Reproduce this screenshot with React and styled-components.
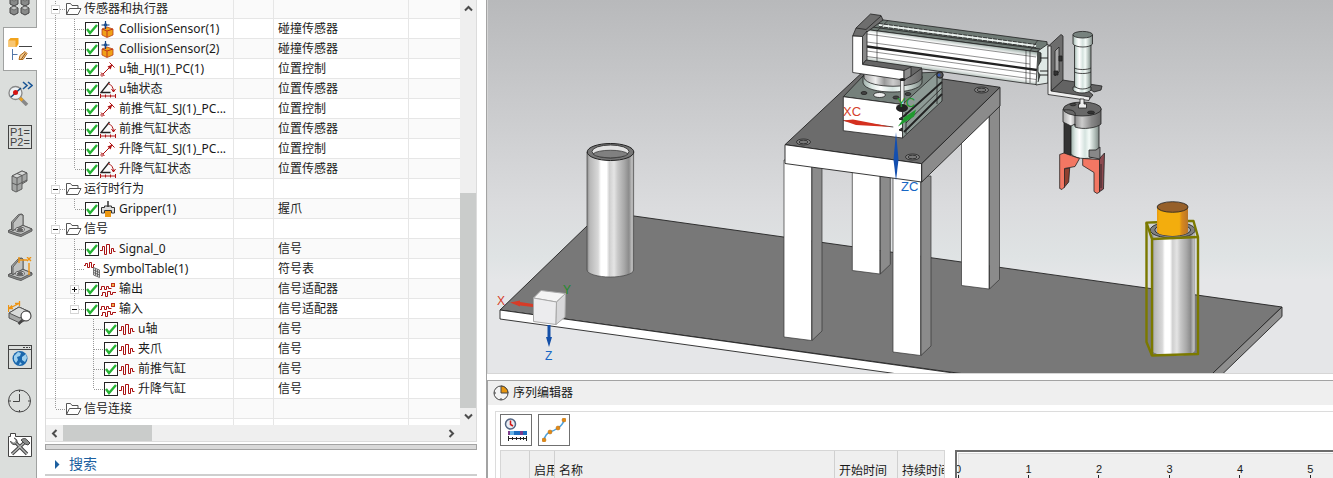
import React from 'react';
import styled, { createGlobalStyle } from 'styled-components';

const GlobalStyle = createGlobalStyle`
  * { box-sizing: border-box; }
  body {
    margin: 0;
    background: #fff;
    color: #1a1a1a;
    font-family: "Noto Sans", "Noto Sans CJK SC", sans-serif;
    font-size: 12px;
    line-height: 16px;
  }
  button {
    margin: 0;
    padding: 0;
    border: 0;
    background: none;
    color: inherit;
    font: inherit;
  }
  svg { display: block; }
`;

const Page = styled.div`
  display: flex;
  height: 100vh;
  overflow: hidden;
`;

const Rail = styled.nav`
  flex: 0 0 37px;
  overflow: hidden;
  background: #dbdedc;
  box-shadow: inset -1px 0 #a0a2a1;
`;

const RailList = styled.div`
  display: flex;
  flex-direction: column;
  margin-top: -17px;
`;

const RailButton = styled.button`
  height: 44px;
  margin-left: 3px;
  padding-left: 4px;
  background: ${ props => props.$active ? '#fff' : 'none' };
  border: 1px solid ${ props => props.$active ? '#a0a2a1' : 'transparent' };
  border-width: 1px 0 1px 1px;
`;

const Navigator = styled.aside`
  flex: 0 0 432px;
  display: flex;
  flex-direction: column;
  margin: 0 9px 0 8px;
  padding-bottom: 2px;
`;

const TreeFrame = styled.div`
  flex: 1;
  min-height: 0;
  display: grid;
  grid-template-columns: 1fr 16px;
  grid-template-rows: 1fr 16px;
  border: 1px solid #dcdcdc;
  border-top: 0;
  background: #efefef;
`;

const TreeView = styled.div`
  overflow: hidden;
  background: #fff;
`;

const TreeTable = styled.table`
  width: 100%;
  margin-top: -1px;
  table-layout: fixed;
  border-collapse: separate;
  border-spacing: 0;
  tr:nth-child(odd) { background: #fafafa; }
`;

const Cell = styled.td`
  height: 20px;
  padding: 0 0 0 ${ props => props.$text ? 4 : 0 }px;
  white-space: nowrap;
  overflow: hidden;
  box-shadow: inset -1px -1px #e6e6e6;
  &:last-child { box-shadow: inset 0 -1px #e6e6e6; }
`;

const NodeLine = styled.div`
  display: flex;
  align-items: center;
  height: 20px;
`;

const NodeLabel = styled.label`
  padding-left: 2px;
`;

const Tick = styled.input`
  appearance: none;
  flex: none;
  width: 14px;
  height: 14px;
  margin: 0 1px;
  border: 1px solid #222;
  background: #fff url("data:image/svg+xml,%3Csvg xmlns='http://www.w3.org/2000/svg' viewBox='0 0 12 12'%3E%3Cpath d='M1 6l3 4L11 2' fill='none' stroke='%2326b535' stroke-width='2.4'/%3E%3C/svg%3E");
`;

const ScrollColumn = styled.div`
  display: flex;
  flex-direction: column;
  align-items: stretch;
  min-height: 0;
`;

const ScrollRow = styled.div`
  display: flex;
`;

const ScrollArrow = styled.button`
  flex: 0 0 17px;
  display: flex;
  align-items: center;
  justify-content: center;
`;

const ScrollTrack = styled.div`
  flex: 1;
  display: flex;
  flex-direction: ${ props => props.$vertical ? 'column' : 'row' };
  justify-content: ${ props => props.$vertical ? 'flex-end' : 'flex-start' };
`;

const ScrollThumb = styled.div`
  flex: 0 0 ${ props => props.$size };
  background: #cacccb;
`;

const Splitter = styled.div`
  height: 6px;
  margin-top: 2px;
  border: 1px solid #a3a3a3;
  background: #d9d9d9;
`;

const SearchToggle = styled.button`
  display: flex;
  align-items: center;
  gap: 9px;
  height: 26px;
  padding: 4px 0 0 9px;
  border-bottom: 2px solid #cecece;
  color: #1c5f9f;
  font-size: 14px;
`;

const Workspace = styled.main`
  flex: 1;
  min-width: 0;
  display: flex;
  flex-direction: column;
  gap: 6px;
  border-left: 1px solid #a3a3a3;
`;

const Viewport = styled.section`
  flex: 1;
  min-height: 0;
  border: 1px solid #d6d6d6;
  border-width: 0 0 1px 1px;
  background: linear-gradient(#b8b9bb, #dbdcde 56%, #dfe3e4 69%, #e5e6e8 75%, #e5e6e8);
`;

const Editor = styled.section`
  flex: 0 0 98px;
  overflow: hidden;
  border: 1px solid #a3a3a3;
  border-width: 1px 0 0 1px;
`;

const EditorTitle = styled.h2`
  display: flex;
  align-items: center;
  gap: 4px;
  height: 24px;
  margin: 0 0 6px;
  padding-left: 5px;
  background: #efefef;
  font-size: 12px;
  font-weight: 400;
`;

const EditorBody = styled.div`
  margin-left: 7px;
  padding: 2px 0 0 4px;
  border: 1px solid #dcdcdc;
  border-width: 1px 0 0 1px;
`;

const Toolbar = styled.div`
  display: flex;
  gap: 6px;
  margin-bottom: 4px;
`;

const ToolButton = styled.button`
  width: 32px;
  height: 32px;
  padding: 3px;
  border: 1px solid #707070;
  background: #fff;
`;

const Schedule = styled.div`
  display: flex;
  gap: 10px;
`;

const StepTable = styled.table`
  flex: 0 0 445px;
  width: 445px;
  table-layout: fixed;
  border-spacing: 0;
  border: 1px solid #d6d6d6;
  background: #efefef;
`;

const StepHead = styled.th`
  height: 40px;
  padding: 0 0 0 4px;
  border-right: 1px solid #d0d0d0;
  font-weight: 400;
  text-align: left;
  white-space: nowrap;
  overflow: hidden;
  &:last-child { border-right: 0; }
`;

const Ruler = styled.div`
  flex: 1;
  min-width: 0;
  display: flex;
  overflow: hidden;
  height: 40px;
  border: 2px solid #6c6c6c;
  border-width: 2px 0 0 2px;
  padding: 12px 0 0 1px;
  background: #efefef;
  box-shadow: inset 1px 1px #fff, inset 2px 2px #d9d9d9;
`;

const Second = styled.div`
  flex: 0 0 18.8%;
  height: 26px;
`;

const SecondLabel = styled.span`
  display: block;
  width: 20px;
  margin-left: -10px;
  font: 11px/11px "Liberation Sans", sans-serif;
  text-align: center;
  &::after {
    content: "";
    display: block;
    width: 1px;
    height: 10px;
    margin: 0 auto;
    background: #222;
  }
`;

// line: passes through, tee: passes with a branch, end: last branch
const Guide = ({ kind, toggle }) => (
  <svg width="19" height="20" viewBox="0 0 19 20" shapeRendering="crispEdges" style={{ flex: 'none' }}>
    <g stroke="#999" strokeDasharray="1 1" fill="none">
      { kind !== 'none' && <path d={ kind === 'end' ? 'M9.5 0V10' : 'M9.5 0V20' } /> }
      { (kind === 'tee' || kind === 'end') && <path d="M9.5 10.5H19" /> }
    </g>
    { toggle && <>
      <rect x="5.5" y="6.5" width="8" height="8" fill="#fff" stroke="#d5d5d5" />
      <path d={ toggle === 'plus' ? 'M7 10.5h5M9.5 8v5' : 'M7 10.5h5' } stroke="#111" fill="none" />
    </> }
  </svg>
);

const icons = {
  folder: <path d="M1.5 13.5v-11h4l1.500 2h6v3M1.5 13.5l3-6h11.500l-3 6z" fill="#fff" stroke="#555" />,
  sensor: <>
    <path d="M2 8l5-2 6 2v6l-6 2.500-5-2.500z" fill="#f0a018" stroke="#b8401c" strokeWidth="0.800" />
    <path d="M2 8l5 2v6M7 10l6-2" fill="none" stroke="#c03418" />
    <path d="M5.500 0v8M1.500 4h8" stroke="#123f7c" strokeWidth="1.200" />
    <circle cx="5.500" cy="4" r="1.800" fill="#1c4f92" />
  </>,
  position: <>
    <path d="M2.500 13.500L11 5M9.500 1.500l5 5M1 11.500l3.500 3.500" stroke="#ad1010" fill="none" />
    <path d="M7.500 5.500l5-2-2 5z" fill="#ad1010" />
    <circle cx="2" cy="14" r="1.200" fill="#fff" stroke="#ad1010" strokeWidth="0.800" />
  </>,
  angle: <>
    <path d="M9.500 1L1 11.500h9.500" stroke="#222" strokeWidth="1.300" fill="none" />
    <path d="M8 2.500c3.500 1 5.500 4 5.500 8.500M11.500 8l2 3 2-3M0.500 13v4M15.500 13v4M1 15h14M5.500 13.500v3M10.500 13.500v3" stroke="#b01212" fill="none" />
  </>,
  gripper: <>
    <path d="M1.500 12V6.500h3V5h7v1.500h3V12h-3V9.500h-7V12z" fill="#ddd" stroke="#333" />
    <path d="M8 0v6" stroke="#333" strokeWidth="1.500" />
    <rect x="5" y="10" width="6" height="6" fill="#ec970f" />
  </>,
  signal: <path d="M0 9.500h2.500v-4h2v8h2v-10h3v9h2v-5h2v3h2" fill="none" stroke="#a91010" />,
  symbols: <>
    <path d="M0 4.500h1.500V2.500h2v4h2v-5h2v5h2V3.500H11" fill="none" stroke="#a91010" />
    <path d="M9.500 6.500l6 2.500v7.500l-6-2.500z" fill="#ddd" stroke="#555" strokeWidth="0.800" />
    <path d="M11.500 7.500v7M13.500 8.500v7M9.500 9l6 2.500M9.500 11.500l6 2.500" stroke="#555" strokeWidth="0.800" />
  </>,
  adapter: <>
    <path d="M0 8.500h1.500v-3h3v3h2v-3h2v2h3M1 14.500h1.500v-3h3v4h2v-5h3v3h2v-2H16" fill="none" stroke="#a91010" />
    <rect x="11.500" y="2.500" width="3" height="3" fill="#f3b44a" stroke="#c0301a" />
  </>,
};

const RowIcon = ({ name }) => (
  <svg width="17" height="17" viewBox="0 0 17 17" style={{ flex: 'none' }}>{ icons[name] }</svg>
);

const nodes = [
  { guides: ['tee'], toggle: 'minus', icon: 'folder', label: '传感器和执行器' },
  { guides: ['line', 'tee'], check: true, icon: 'sensor', label: 'CollisionSensor(1)', type: '碰撞传感器' },
  { guides: ['line', 'tee'], check: true, icon: 'sensor', label: 'CollisionSensor(2)', type: '碰撞传感器' },
  { guides: ['line', 'tee'], check: true, icon: 'position', label: 'u轴_HJ(1)_PC(1)', type: '位置控制' },
  { guides: ['line', 'tee'], check: true, icon: 'angle', label: 'u轴状态', type: '位置传感器' },
  { guides: ['line', 'tee'], check: true, icon: 'position', label: '前推气缸_SJ(1)_PC...', type: '位置控制' },
  { guides: ['line', 'tee'], check: true, icon: 'angle', label: '前推气缸状态', type: '位置传感器' },
  { guides: ['line', 'tee'], check: true, icon: 'position', label: '升降气缸_SJ(1)_PC...', type: '位置控制' },
  { guides: ['line', 'end'], check: true, icon: 'angle', label: '升降气缸状态', type: '位置传感器' },
  { guides: ['tee'], toggle: 'minus', icon: 'folder', label: '运行时行为' },
  { guides: ['line', 'end'], check: true, icon: 'gripper', label: 'Gripper(1)', type: '握爪' },
  { guides: ['tee'], toggle: 'minus', icon: 'folder', label: '信号' },
  { guides: ['line', 'tee'], check: true, icon: 'signal', label: 'Signal_0', type: '信号' },
  { guides: ['line', 'tee'], icon: 'symbols', label: 'SymbolTable(1)', type: '符号表' },
  { guides: ['line', 'tee'], toggle: 'plus', check: true, icon: 'adapter', label: '输出', type: '信号适配器' },
  { guides: ['line', 'end'], toggle: 'minus', check: true, icon: 'adapter', label: '输入', type: '信号适配器' },
  { guides: ['line', 'none', 'tee'], check: true, icon: 'signal', label: 'u轴', type: '信号' },
  { guides: ['line', 'none', 'tee'], check: true, icon: 'signal', label: '夹爪', type: '信号' },
  { guides: ['line', 'none', 'tee'], check: true, icon: 'signal', label: '前推气缸', type: '信号' },
  { guides: ['line', 'none', 'end'], check: true, icon: 'signal', label: '升降气缸', type: '信号' },
  { guides: ['end'], icon: 'folder', label: '信号连接' },
];

const TreeRow = ({ node, id }) => (
  <tr>
    <Cell>
      <NodeLine>
        { node.guides.map((kind, i) =>
          <Guide key={ i } kind={ kind } toggle={ i === node.guides.length - 1 ? node.toggle : null } />
        ) }
        { node.check && <Tick type="checkbox" id={ id } defaultChecked /> }
        <RowIcon name={ node.icon } />
        <NodeLabel htmlFor={ node.check ? id : undefined }>{ node.label }</NodeLabel>
      </NodeLine>
    </Cell>
    <Cell />
    <Cell $text>{ node.type }</Cell>
    <Cell />
  </tr>
);

const Chevron = ({ d }) => (
  <svg width="9" height="9" viewBox="0 0 9 9"><path d={ d } fill="none" stroke="#4c4c4c" strokeWidth="2" /></svg>
);

const bracket = <g stroke="#555" strokeWidth="0.900" strokeLinejoin="round">
  <path d="M0.500 17.500L14 12L24 16v2l-11 5.500-4-1-8.500-3z" fill="#8a8c8b" />
  <path d="M0.500 17.500L14 12L24 16l-11 5.500-4-1z" fill="#c3c5c4" />
  <path d="M3.500 17V9l7-7.500 3-0.500 1.500 1v10L5 17.500z" fill="#a2a4a3" />
  <path d="M5 17.500V10l7-8.500 3 0.500v10z" fill="#bfc1c0" />
  <ellipse cx="12" cy="16.500" rx="4.500" ry="2.300" fill="#e2e3e2" />
  <ellipse cx="12" cy="16.800" rx="2.800" ry="1.300" fill="#666" />
</g>;

const railItems = [
  { label: '装配', art: [[6, 8], [17, 8], [6, 17], [17, 17]].map(([x, y]) =>
    <g key={ `${x}-${y}` } stroke="#444" fill="#888a89">
      <path d={ `M${x - 4} ${y - 2}l4-2 4 2v5l-4 2-4-2z` } />
      <path d={ `M${x - 4} ${y - 2}l4 2 4-2-4-2z` } fill="#c2c4c3" strokeWidth="0.600" />
    </g>
  ) },
  { label: '导航器', active: true, art: <>
    <path d="M0.500 3l2-2h8v6l-2 3h-8z" fill="#f1a31d" />
    <path d="M0.500 3.500h7V10h-7z" fill="#f8c774" />
    <path d="M11 9.500h13M18 21.500h6" stroke="#444" />
    <path d="M4.500 12v11M4.500 17.500h5" stroke="#5377a8" fill="none" />
    <path d="M11 22.500l1-4 5-4 2 2-4 6z" fill="#f4c98b" stroke="#b26c1c" />
    <path d="M13.500 22l4-6" stroke="#8d541a" />
  </> },
  { label: '检查', art: <>
    <circle cx="7.500" cy="12" r="6.500" fill="#eef2f5" stroke="#888" strokeWidth="1.300" />
    <path d="M3 16L13 7" stroke="#174574" strokeWidth="1.500" />
    <circle cx="7.500" cy="11.500" r="2.500" fill="#d61515" />
    <path d="M12 17l7 7" stroke="#888" strokeWidth="3.500" />
    <path d="M12 17l2.500 2.500" stroke="#e8a020" strokeWidth="3" />
    <path d="M15 1l4 3.500-4 3.500M20 1l4 3.500-4 3.500" fill="none" stroke="#1c5796" strokeWidth="1.600" />
  </> },
  { label: '表达式', art: <>
    <rect x="0.500" y="0.500" width="23" height="23" fill="none" stroke="#444" />
    <g fill="#444" fontFamily="Liberation Sans, sans-serif" fontSize="11">
      <text x="2" y="11">P1=</text><text x="2" y="21">P2=</text>
    </g>
  </> },
  { label: '重用库', art: <g stroke="#555" strokeWidth="0.900" fill="#a4a6a5" strokeLinejoin="round">
    <path d="M4 7l10-5 5 2v8l-5 3v5l-6 3-4-2z" />
    <path d="M4 7l10-5 5 2-10 5z" fill="#d6d8d7" />
    <path d="M9 9v13.500M4 14l5 2 10-5M14 6.500v8.500M9 4.500l5 2" fill="none" />
  </g> },
  { label: '零件', art: bracket },
  { label: '尺寸', art: <>
    { bracket }
    <path d="M11 3h8M21 6v12M11 0v6M19 0l4 4M23 0l-4 4" stroke="#ed9312" strokeWidth="1.400" />
  </> },
  { label: '测量', art: <>
    <path d="M1 12l10-6 11 5v6l-10 5-11-5z" fill="#a6a8a7" stroke="#555" />
    <path d="M1 12l10-6 11 5-10 6z" fill="#d8dad9" stroke="#555" />
    <circle cx="18" cy="15" r="5" fill="#fff" stroke="#333" />
    <path d="M14.500 19l-4 4" stroke="#444" strokeWidth="2.500" />
    <path d="M1 7.500l10-5M0.500 4v7M11.500 0v5M1 7.500l3-3M1 7.500h4M11 2.500h-4" stroke="#ed9312" strokeWidth="1.300" />
  </> },
  { label: '浏览器', art: <>
    <rect x="0.500" y="0.500" width="23" height="23" fill="#dbdedc" stroke="#444" />
    <path d="M1 4.500h22" stroke="#444" />
    <path d="M15 2.500h2M18 2.500h2M21 2.500h1" stroke="#444" />
    <circle cx="12" cy="13.500" r="7.500" fill="#1a67ad" />
    <path d="M6 11l4-4 3 1-1 3-3 1 1 3-2 3-2-3zM14 12l4-3 1 4-2 4-3-2zM12 17l2 2-3 1z" fill="#9fd0ee" />
  </> },
  { label: '历史', art: <>
    <circle cx="11.500" cy="12" r="11" fill="none" stroke="#444" />
    <path d="M11.500 5v7.500H5M11.500 1v2M11.500 21v2M1 12h2M20 12h2" stroke="#444" fill="none" />
  </> },
  { label: '工具', art: <>
    <path d="M0.500 23.500V3.500h2v-3h5v3h16v20z" fill="#fff" stroke="#444" />
    <path d="M7 9l12 12M4 21L17 9" stroke="#444" strokeWidth="3.400" />
    <path d="M7 9l12 12M4 21L17 9" stroke="#b5b7b6" strokeWidth="1.400" />
    <path d="M2.500 8a4 4 0 0 0 6 3M6 5a4 4 0 0 1 3 5M13 7c2-2 5-2 6 0l3 3-2 2-3-1z" fill="#8a8c8b" stroke="#444" />
  </> },
];

const Metal = ({ id, stops }) => (
  <linearGradient id={ id }>
    { stops.map(([at, color]) => <stop key={ at } offset={ at } stopColor={ color } />) }
  </linearGradient>
);

const Leg = ({ x, bottom, top }) => (
  <g stroke="#333" strokeWidth="0.700">
    <path d={ `M${x + 28} ${top}V${bottom + 3.5}L${x + 38} ${bottom - 6}V${top}z` } fill="#8b8b8b" />
    <path d={ `M${x} ${top}V${bottom}L${x + 27.5} ${bottom + 3.5}V${top}z` } fill="#fff" />
  </g>
);

const Hole = ({ x, y }) => (
  <g fill="#aaa" stroke="#222" strokeWidth="0.800">
    <ellipse cx={ x } cy={ y } rx="7" ry="3" fill="#888" />
    <ellipse cx={ x } cy={ y } rx="4.500" ry="1.800" fill="#777" />
  </g>
);

const Scene = () => (
  <svg width="100%" height="100%" viewBox="488 0 845 373" preserveAspectRatio="xMidYMid slice" role="img" aria-label="模型">
    <defs>
      <Metal id="tube" stops={ [[0, '#8c8c8c'], [0.06, '#b8b8b8'], [0.24, '#d8d8d8'], [0.3, '#fff'], [0.42, '#fff'], [0.48, '#d0d0d0'], [0.58, '#e4e4e4'], [0.66, '#c8c8c8'], [0.8, '#a8a8a8'], [0.9, '#8b8b8b'], [0.96, '#bbb'], [1, '#aaa']] } />
      <Metal id="glass" stops={ [[0, '#9fb0aa'], [0.15, '#dce8e4'], [0.3, '#fff'], [0.5, '#d4e2de'], [0.65, '#f4fbf8'], [0.85, '#b2bfba'], [1, '#7e8884']] } />
      <Metal id="steel" stops={ [[0, '#aaa'], [0.2, '#eee'], [0.35, '#999'], [0.5, '#ccc'], [0.75, '#888'], [1, '#666']] } />
      <Metal id="orange" stops={ [[0, '#e99a13'], [0.08, '#f3ad0d'], [0.72, '#f3ad0d'], [0.8, '#d98a1c'], [1, '#b8742b']] } />
      <linearGradient id="rail" gradientUnits="userSpaceOnUse" x1="950" y1="40" x2="945" y2="74">
        <stop offset="0" stopColor="#a6b5af" /><stop offset="0.14" stopColor="#fff" />
        <stop offset="0.8" stopColor="#fff" /><stop offset="1" stopColor="#9aaba4" />
      </linearGradient>
    </defs>

    {/* base plate */}
    <g stroke="#222" strokeWidth="0.900" strokeLinejoin="round">
      <path d="M500 310L602 211.500L1282 307L1213 373.500L1200 400L957 373z" fill="#787878" />
      <path d="M1282 307v9.500L1223 373.500L1213 380V373z" fill="#8f8f8f" />
      <path d="M500 310L957 373.500L970 385L891 373L500 319z" fill="#fff" />
    </g>

    {/* left tube */}
    <path d="M587 152V270a23.300 7 0 0 0 46.600 0V152z" fill="url(#tube)" stroke="#444" strokeWidth="0.700" />
    <ellipse cx="610.500" cy="152" rx="23.300" ry="8.500" fill="#777" stroke="#222" />
    <ellipse cx="610.500" cy="151.500" rx="18.500" ry="6.500" fill="#e2e2e2" stroke="#222" strokeWidth="0.800" />
    <path d="M593 154c4-5 31-5 35 0c-4 5-31 5-35 0z" fill="#808080" stroke="#333" strokeWidth="0.700" />

    {/* orientation cube */}
    <g stroke="#a8a8a8" fill="#ececee" strokeLinejoin="round">
      <path d="M533.500 298L541 290.500L565.500 293.500L556.500 302z" fill="#f4f4f4" />
      <path d="M533.500 298L556.500 302L556 324.500L533.500 321.500z" />
      <path d="M556.500 302L565.500 293.500L565 317L556 324.500z" fill="#d8d8da" />
    </g>
    <path d="M510 302.500l10-2v1.500l13 2v3l-13-1.500v1z" fill="#d63c28" />
    <path d="M547.500 325h3v12h1.500l-3 10-3-10h1.500z" fill="#134fa8" />
    <g fontFamily="Liberation Sans, sans-serif" fontSize="12">
      <text x="497" y="305" fill="#d63c28">X</text>
      <text x="563" y="294" fill="#238b2c">Y</text>
      <text x="545" y="360" fill="#1767c5">Z</text>
    </g>

    {/* table */}
    <Leg x={ 852.3 } top={ 150 } bottom={ 270.5 } />
    <Leg x={ 961.5 } top={ 100 } bottom={ 285.5 } />
    <Leg x={ 784 } top={ 160 } bottom={ 337 } />
    <Leg x={ 893 } top={ 176 } bottom={ 352 } />
    <g stroke="#222" strokeWidth="0.900" strokeLinejoin="round">
      <path d="M785 144.700L867 68L1000 87.300L921.700 163.700z" fill="#6c6c6c" />
      <path d="M785 144.700L921.700 163.700V182L785 163.500z" fill="#fff" />
      <path d="M921.700 163.700L1000 87.300V106L921.700 182z" fill="#8b8b8b" />
    </g>
    <Hole x={ 803.5 } y={ 142 } />
    <Hole x={ 912.5 } y={ 157 } />
    <Hole x={ 981.5 } y={ 90 } />

    {/* rotary unit */}
    <g stroke="#222" strokeWidth="0.800" strokeLinejoin="round">
      <path d="M843.300 96.700L864 75L941.700 72L903 104.500z" fill="#75807b" />
      <path d="M902.500 104.500L938 72l4 3v26L902.500 138z" fill="#8d9a95" />
      <path d="M843.300 96.700L902.500 104.500V138L843.300 130.700z" fill="#fff" />
      <path d="M843.300 120.500l50 6.500" />
      <path d="M903 117L942 82M904 132L942 94" strokeWidth="1.800" />
      <path d="M906 123L942 88M906 112V134M937 74V104" fill="none" />
      <path d="M863 76v7c3 12 55 12 59 0v-7z" fill="url(#glass)" />
      <path d="M864 68v10c4 11 54 11 58 0V68z" fill="url(#steel)" />
    </g>
    <g fill="#eee" stroke="#222" strokeWidth="0.800">
      <ellipse cx="879.500" cy="95" rx="6" ry="2.500" />
      <ellipse cx="864" cy="93" rx="3" ry="1.500" fill="#444" />
      <ellipse cx="896" cy="97.500" rx="3" ry="1.500" fill="#444" />
      <ellipse cx="908" cy="94" rx="3" ry="1.500" fill="#444" />
    </g>
    <circle cx="940" cy="75" r="3.200" fill="#555" stroke="#222" />
    <circle cx="939" cy="75" r="1.500" fill="#3659ad" />

    {/* linear axis */}
    <g stroke="#222" strokeWidth="0.800" strokeLinejoin="round">
      <path d="M880 19.500L1047 41.700L1047 48L1038 52L866.500 29.500z" fill="#6f7a75" />
      <path d="M866.500 29.500L1038 52V80L1036 84.500L1020 82.500L908 67L866.500 61z" fill="url(#rail)" />
      <path d="M879 25L1036 46" stroke="#e8efec" strokeWidth="2.500" />
      <path d="M879 23.500L1036 44.500M879 26.500L1036 47.500" strokeDasharray="4 1" fill="none" />
      <path d="M872 27L1040 49" fill="none" />
      <path d="M867 46.500L1037 70" strokeWidth="2.300" />
      <path d="M867 34L1036 57M867 42L1030 64M867 51L1036 74M867 56.500L1036 79.500" strokeWidth="0.500" fill="none" />
      <path d="M877 31V62M1026 50V83M1030 51V83M1030 51L1038 40M888 20.500L877 31" strokeWidth="0.600" fill="none" />
      <path d="M1038 51l10-7v39l-12 2z" fill="#dfe8e5" />
      <path d="M1037 51l4 2v8l-3 5v6l2 3-2 7" fill="#4e5451" />
      <path d="M1040 58h8M1040 71h8M1040 75h8" strokeWidth="1.200" />
    </g>

    {/* mounting bracket */}
    <g stroke="#222" strokeWidth="0.800" strokeLinejoin="round">
      <path d="M852.700 36L856 28L870.500 14L881 15.500L883 20L867 32L862.500 36.500z" fill="#6e6e6e" />
      <path d="M856 28L866 29.500L881 16" fill="none" />
      <path d="M862.500 36.500L867 31V60L862.500 64z" fill="#888" />
      <path d="M862.500 64.500L866 60L922 68L910 77L904 71z" fill="#666" />
      <path d="M852.700 36L862.500 36.500V64.500L904 70.500V80L852.700 72.500z" fill="#fff" />
      <path d="M904 70.500L911 67v9l-7 4z" fill="#8c8c8c" />
    </g>

    {/* work coordinate system */}
    <path d="M900.500 80h3.500v25h-3.500z" fill="#eee" stroke="#333" strokeWidth="0.700" />
    <ellipse cx="902.500" cy="79.500" rx="3" ry="1.500" fill="#222" />
    <ellipse cx="902" cy="108" rx="6" ry="4" fill="#222" />
    <path d="M843 120.500l10-1 39 7.500-36-2z" fill="#d4301f" />
    <path d="M898 126.500l6-9 12-8-2 7z" fill="#1f9a2e" />
    <path d="M896 132l2.500 28-2.500 20.500-2.500-20.500z" fill="#134fb0" />
    <path d="M899 119l3-2v3zM899 130l3-2v3z" fill="#444" stroke="#222" />
    <g fontFamily="Liberation Sans, sans-serif" fontSize="13">
      <text x="843" y="116" fill="#d4402c">XC</text>
      <text x="897" y="107" fill="#1f9a2e">YC</text>
      <text x="901" y="191" fill="#1767c5">ZC</text>
    </g>

    {/* plate and vertical cylinder */}
    <g stroke="#222" strokeWidth="0.800" strokeLinejoin="round">
      <path d="M1051 91L1062.500 80L1102 86l-1 4-7 2-3-2h-4l6 5-4 4.500z" fill="#636363" />
      <path d="M1048.500 46L1061 34.500L1063 36V80L1051 91z" fill="#6d6d6d" />
      <path d="M1048 46h3v45l39 6-1 3.500-41-6z" fill="#eee" />
      <path d="M1055 51l4-4v25l-4 4z" fill="#aaa" />
      <path d="M1059 56h3v5h-3zM1054 71h4v4h-4z" fill="#333" />
      <path d="M1073 87v3c3 4 15 4 18 0v-3z" fill="url(#glass)" />
      <path d="M1074.500 45V86c3 4 13 4 16.500 0V45z" fill="url(#glass)" />
      <path d="M1074.500 68c3 2 13 2 16.500 0M1074.500 72c3 2 13 2 16.500 0" fill="none" />
      <path d="M1073 35v9c3 4 17 4 19.500 0v-9z" fill="url(#glass)" />
      <ellipse cx="1082.700" cy="34.700" rx="9.800" ry="3.300" fill="#77827e" />
    </g>

    {/* gripper */}
    <g stroke="#222" strokeWidth="0.800" strokeLinejoin="round">
      <path d="M1064 120h7v35h-7z" fill="#333" />
      <path d="M1099 159l5.500-6-1 36-4.500 3z" fill="#8d4a50" />
      <path d="M1063.700 169l6-1-1 14-5 6z" fill="#8f4030" />
      <path d="M1071 124V154c5 6 22 6 28 0V124z" fill="url(#glass)" />
      <path d="M1063 109v13l8 4 4-2v3c8 3 22 1 26-3v-15z" fill="url(#steel)" />
      <ellipse cx="1082.300" cy="109" rx="19" ry="7" fill="#686868" />
      <path d="M1063.500 110c8-1 13 1 11.500 6v10" fill="none" />
      <path d="M1080 99h4v5h2.500v4h-8v-4h1.500z" fill="#eee" />
      <ellipse cx="1091" cy="112.500" rx="3.500" ry="1.500" fill="#333" />
      <ellipse cx="1073" cy="104.500" rx="3" ry="1.300" fill="#444" />
      <path d="M1089 150h7l4-3v12l-11-2z" fill="#888" />
      <path d="M1059.700 154.500L1064 153L1079.500 158.500L1075 166.500L1064.500 168.500V187L1062 189.500L1059.700 188.500z" fill="#f27763" />
      <path d="M1082.700 158.500L1099.500 159.500L1099.500 192L1097 193.500L1094 191.500V172.500L1082.700 165.500z" fill="#f27763" />
      <path d="M1101 164v24" />
    </g>

    {/* right tube, part and its bounding box */}
    <path d="M1145.700 222L1193.300 221L1199 237V354L1151.500 356L1145.700 342z" fill="#888" fillOpacity="0.120" />
    <path d="M1152 232V350a21.500 6 0 0 0 43 0V232z" fill="url(#tube)" />
    <ellipse cx="1172.700" cy="230" rx="22.500" ry="8" fill="#808080" stroke="#333" />
    <ellipse cx="1172.700" cy="230" rx="18" ry="6" fill="#aaa" stroke="#333" />
    <path d="M1157 207V232a15.600 4.500 0 0 0 31 0V207z" fill="url(#orange)" />
    <ellipse cx="1172.600" cy="207" rx="15.500" ry="5.300" fill="#96602a" stroke="#222" strokeWidth="0.800" />
    <g fill="none" stroke="#7b7900" strokeWidth="2.400" strokeLinejoin="round">
      <path d="M1157 222.200L1146.500 222.600V342L1152 355.500L1198 354V237L1193.500 221L1188 221" />
      <path d="M1146.500 222.600L1152 239L1198.500 237M1152 239V355.500" />
    </g>
  </svg>
);

const steps = [
  { label: '', width: 29 },
  { label: '启用', width: 25 },
  { label: '名称', width: 280 },
  { label: '开始时间', width: 63 },
  { label: '持续时间', width: 46 },
];

export default () => (
  <Page>
    <GlobalStyle />
    <Rail>
      <RailList>
        { railItems.map( item =>
          <RailButton key={ item.label } $active={ item.active } aria-label={ item.label }>
            <svg width="25" height="25" viewBox="0 0 25 25">{ item.art }</svg>
          </RailButton>
        ) }
      </RailList>
    </Rail>
    <Navigator>
      <TreeFrame>
        <TreeView>
          <TreeTable>
            <colgroup>
              <col width="188" /><col width="40" /><col width="135" /><col />
            </colgroup>
            <tbody>
              { nodes.map((node, i) => <TreeRow key={ i } id={ `node-${i}` } node={ node } />) }
              <tr><Cell /><Cell /><Cell /><Cell /></tr>
            </tbody>
          </TreeTable>
        </TreeView>
        <ScrollColumn>
          <ScrollArrow aria-label="向上"><Chevron d="M1 6.500l3.500-3.500L8 6.500" /></ScrollArrow>
          <ScrollTrack $vertical><ScrollThumb $size="55%" /></ScrollTrack>
          <ScrollArrow aria-label="向下"><Chevron d="M1 2.500L4.500 6L8 2.500" /></ScrollArrow>
        </ScrollColumn>
        <ScrollRow>
          <ScrollArrow aria-label="向左"><Chevron d="M6.500 1L3 4.500L6.500 8" /></ScrollArrow>
          <ScrollTrack><ScrollThumb $size="89px" /></ScrollTrack>
          <ScrollArrow aria-label="向右"><Chevron d="M2.500 1L6 4.500L2.500 8" /></ScrollArrow>
        </ScrollRow>
      </TreeFrame>
      <Splitter />
      <SearchToggle>
        <svg width="6" height="9" viewBox="0 0 6 9"><path d="M1 0l4.500 4.500L1 9z" fill="#1c5f9f" /></svg>
        搜索
      </SearchToggle>
    </Navigator>
    <Workspace>
      <Viewport><Scene /></Viewport>
      <Editor>
        <EditorTitle>
          <svg width="16" height="16" viewBox="0 0 16 16">
            <circle cx="8" cy="8" r="7" fill="#f3f3f3" stroke="#444" />
            <path d="M8 8V1a7 7 0 0 1 7 7z" fill="#e8960f" stroke="#444" />
            <path d="M8 13v2M1 8h2" stroke="#444" />
          </svg>
          序列编辑器
        </EditorTitle>
        <EditorBody>
          <Toolbar>
            <ToolButton aria-label="时间轴">
              <svg width="24" height="24" viewBox="0 0 24 24">
                <circle cx="6.500" cy="6" r="5" fill="#e9eef5" stroke="#536583" strokeWidth="1.500" />
                <path d="M6.500 2.500V6.500L9 8" stroke="#d11717" strokeWidth="1.500" fill="none" />
                <path d="M4 13h19v4H4z" fill="#1d6fc0" />
                <path d="M4 13h2v4H4zM16 13h3v4h-3z" fill="#7d3c8c" />
                <path d="M6 13h4v4H6z" fill="#69b5e8" />
                <path d="M4.500 18v5M22.500 18v5M4 20.500h19M8.500 19v3M12.500 19v3M16.500 19v3M19.500 19v3" stroke="#222" />
              </svg>
            </ToolButton>
            <ToolButton aria-label="曲线">
              <svg width="24" height="24" viewBox="0 0 24 24">
                <path d="M2 22c1-4 3-7 6-8s5-2 8-4 5-4 6-8" fill="none" stroke="#4ba0dc" strokeWidth="1.500" />
                <g fill="#e28a14" stroke="#b8690a" strokeWidth="0.500">
                  <circle cx="2" cy="22" r="2" /><circle cx="8" cy="14" r="2" />
                  <circle cx="16" cy="10" r="2" /><circle cx="22" cy="2" r="2" />
                </g>
              </svg>
            </ToolButton>
          </Toolbar>
          <Schedule>
            <StepTable>
              <colgroup>
                { steps.map( step => <col key={ step.width } width={ step.width } />) }
              </colgroup>
              <thead>
                <tr>{ steps.map( step => <StepHead key={ step.width }>{ step.label }</StepHead>) }</tr>
              </thead>
            </StepTable>
            <Ruler>
              { [0, 1, 2, 3, 4, 5].map( n =>
                <Second key={ n }><SecondLabel>{ n }</SecondLabel></Second>
              ) }
            </Ruler>
          </Schedule>
        </EditorBody>
      </Editor>
    </Workspace>
  </Page>
);
